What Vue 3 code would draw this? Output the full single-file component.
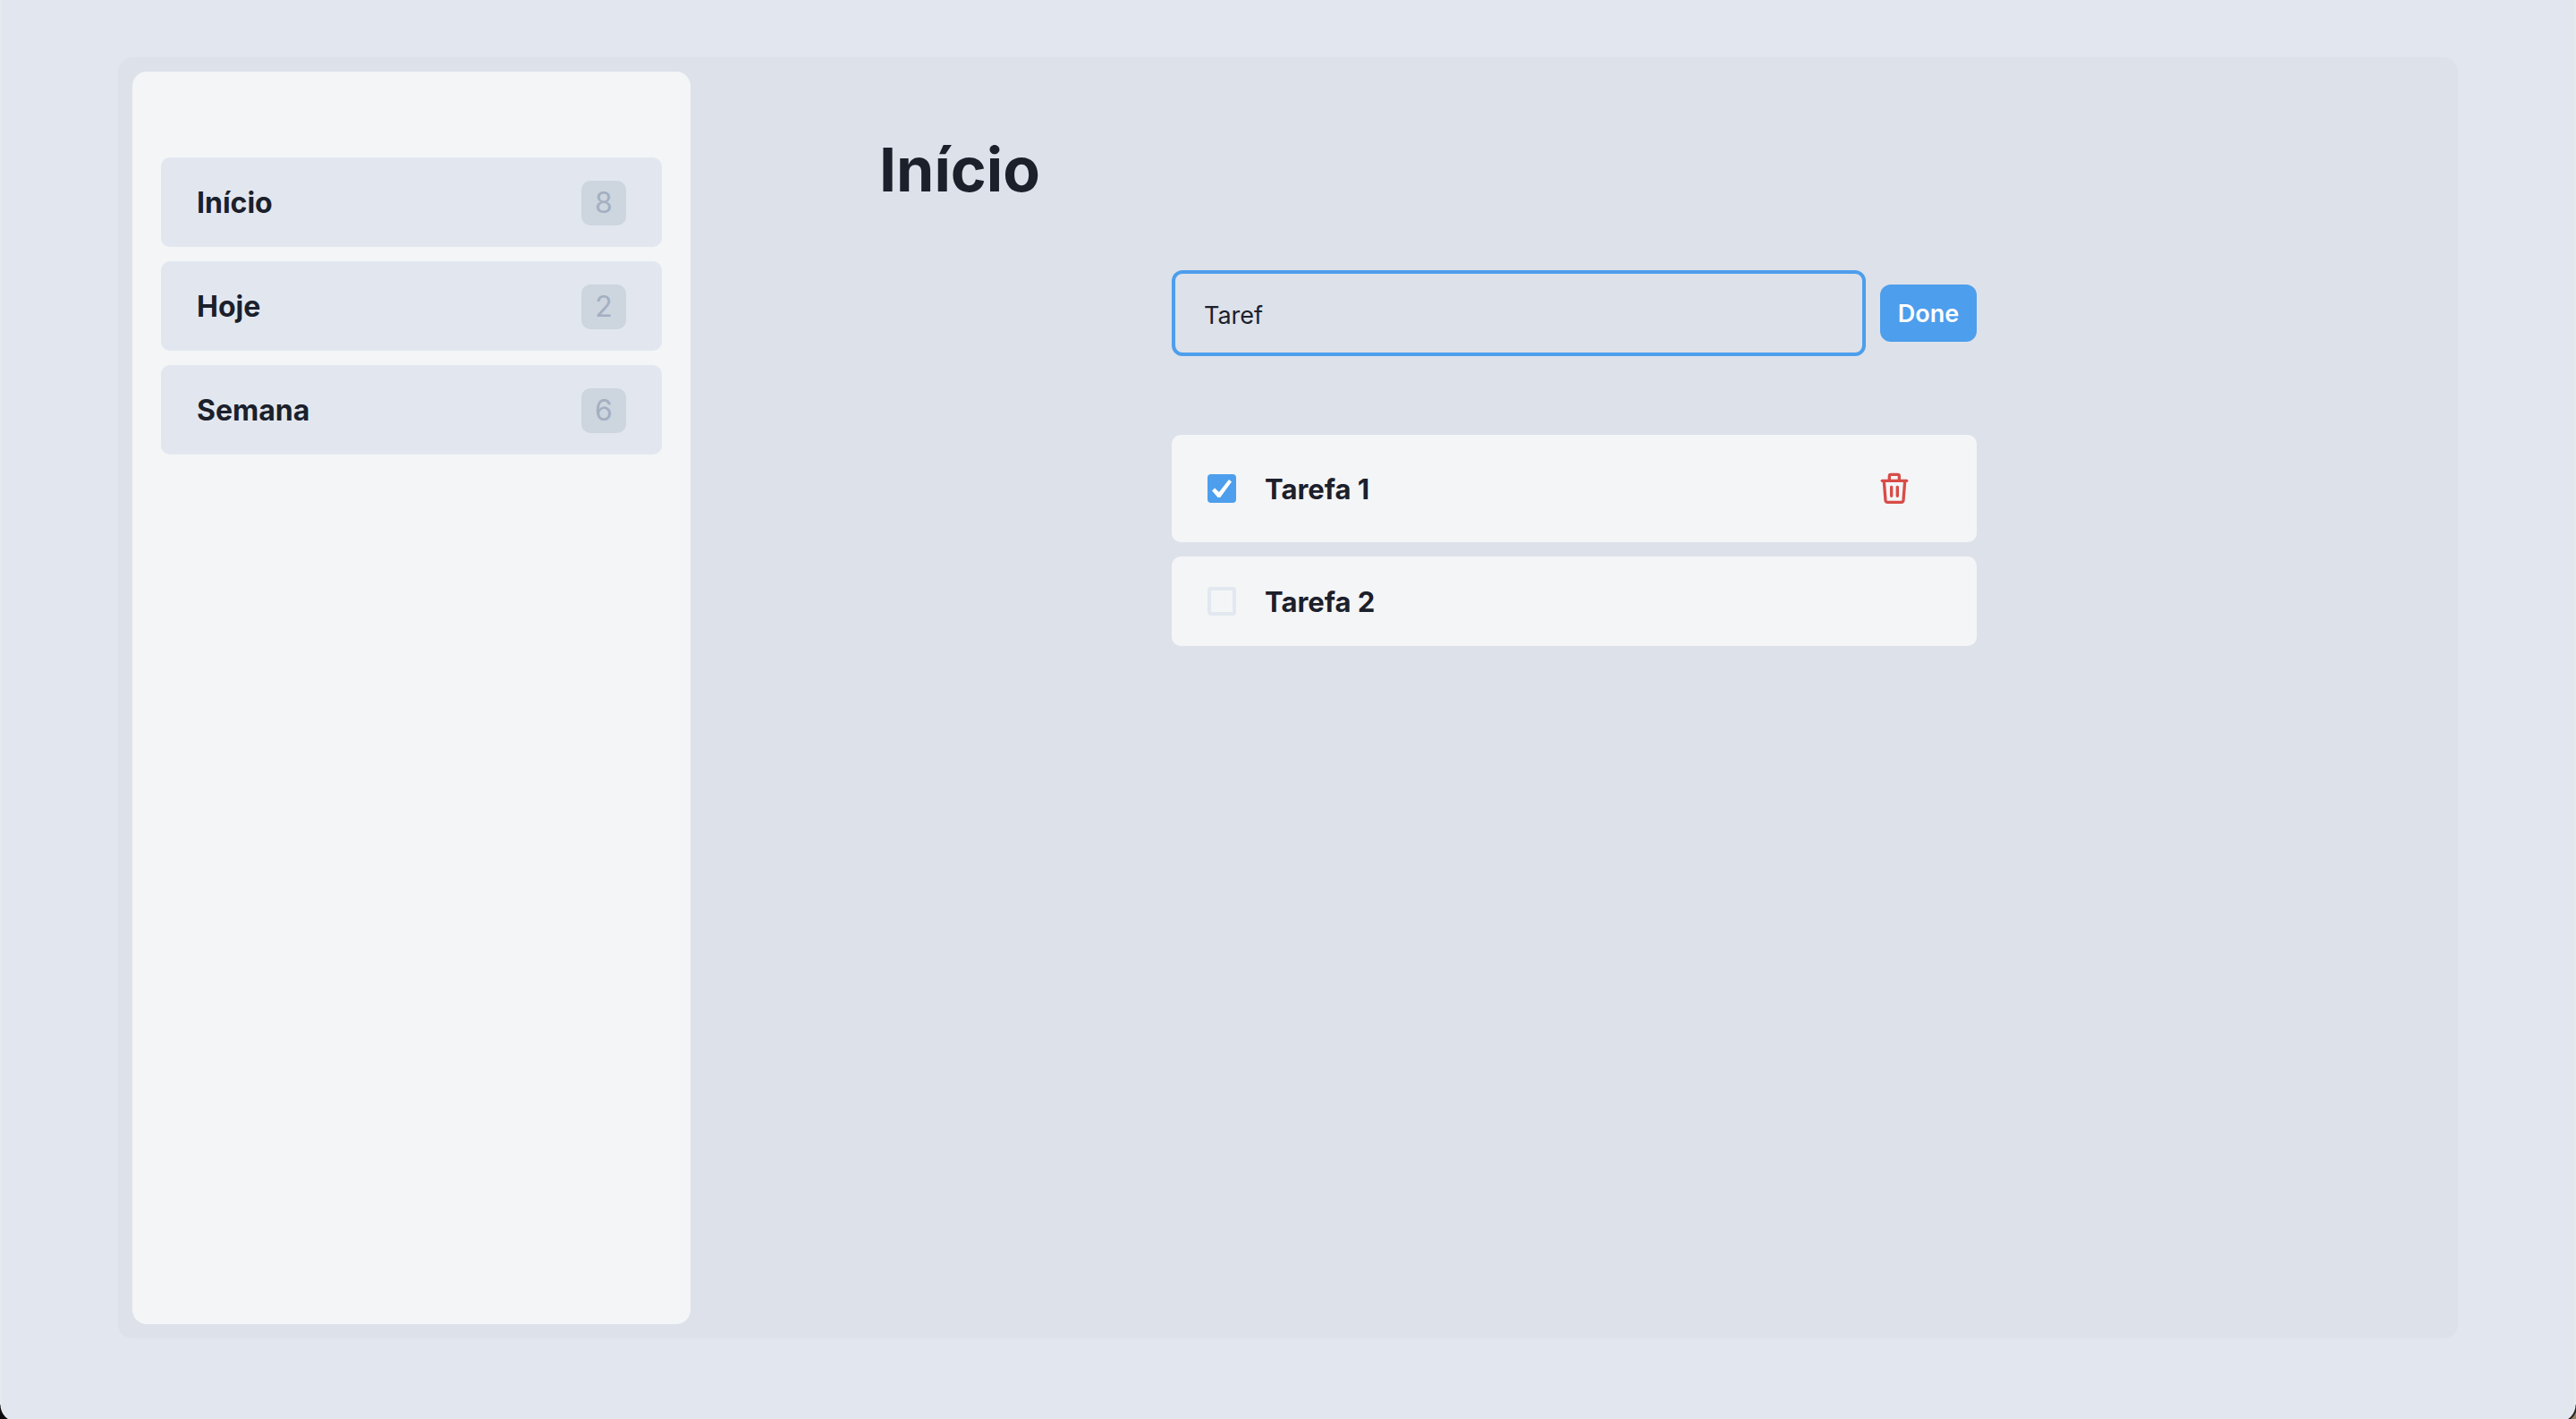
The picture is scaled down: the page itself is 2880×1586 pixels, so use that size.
<script setup>
import { ref } from 'vue'

const lists = [
  { name: 'Início', count: 8 },
  { name: 'Hoje', count: 2 },
  { name: 'Semana', count: 6 },
]

const draft = ref('Taref')

const tasks = ref([
  { id: 1, title: 'Tarefa 1', done: true },
  { id: 2, title: 'Tarefa 2', done: false },
])

function addTask() {
  if (!draft.value.trim()) return
  tasks.value.push({ id: Date.now(), title: draft.value, done: false })
  draft.value = ''
}

function removeTask(id) {
  tasks.value = tasks.value.filter((task) => task.id !== id)
}
</script>

<template>
  <div class="page">
    <div class="board">
      <nav class="sidebar" aria-label="Listas">
        <a v-for="list in lists" :key="list.name" class="list-link" href="#">
          <span class="list-name">{{ list.name }}</span>
          <span class="list-count">{{ list.count }}</span>
        </a>
      </nav>

      <main class="content">
        <h1 class="title">Início</h1>

        <div class="tasks">
          <form class="new-task" @submit.prevent="addTask">
            <input v-model="draft" class="new-input" type="text" aria-label="Nova tarefa" />
            <button class="done-button" type="submit">Done</button>
          </form>

          <ul class="task-list">
            <li v-for="task in tasks" :key="task.id" class="task">
              <label class="task-label">
                <input v-model="task.done" class="check" type="checkbox" />
                <span class="task-title">{{ task.title }}</span>
              </label>
              <button
                v-if="task.done"
                class="delete-button"
                type="button"
                aria-label="Excluir"
                @click="removeTask(task.id)"
              >
                <svg class="trash" viewBox="0 0 90 102" aria-hidden="true">
                  <path d="M4 25H86" />
                  <path d="M28 25V9q0-5 5-5h23q5 0 5 5v16" />
                  <path d="M10 27l5 63q1 7 7 7h46q6 0 7-7l5-63" />
                  <path d="M35 46v30M55 46v30" />
                </svg>
              </button>
            </li>
          </ul>
        </div>
      </main>
    </div>
    <span class="corner corner-left"></span>
    <span class="corner corner-right"></span>
  </div>
</template>

<style>
body {
  margin: 0;
  background: #e2e7ef;
}
</style>

<style scoped>
.page {
  position: relative;
  box-sizing: border-box;
  display: flex;
  min-height: 100vh;
  padding: 64px 130px 90px;
  border: solid #e6eaee;
  border-width: 0 2px;
  background: #e2e7ef;
  color: #1b202b;
  font-family: Inter, "Liberation Sans", sans-serif;
}

.board {
  box-sizing: border-box;
  display: flex;
  flex: 1;
  padding: 16px 0 16px 16px;
  border-radius: 16px;
  background: #dde1ea;
}

.sidebar {
  box-sizing: border-box;
  display: flex;
  flex: 0 1 624px;
  flex-direction: column;
  gap: 16px;
  padding: 96px 32px 32px;
  border-radius: 16px;
  background: #f4f5f7;
}

.list-link {
  box-sizing: border-box;
  display: flex;
  align-items: center;
  justify-content: space-between;
  height: 100px;
  padding: 2px 40px 0;
  border-radius: 10px;
  background: #e2e7ef;
  color: inherit;
  font-size: 32px;
  line-height: 50px;
  text-decoration: none;
}

.list-name {
  font-weight: 700;
}

.list-count {
  width: 50px;
  border-radius: 10px;
  background: #cdd5df;
  color: #a3afc1;
  text-align: center;
}

.content {
  display: flex;
  flex: 1;
  flex-direction: column;
}

.title {
  margin: 68px 0 72px 211px;
  font-size: 68px;
  font-weight: 700;
  line-height: 82px;
}

.tasks {
  width: 900px;
  margin: 0 auto;
}

.new-task {
  display: flex;
  align-items: center;
  gap: 16px;
  margin-bottom: 88px;
}

.new-input {
  box-sizing: border-box;
  flex: 1;
  min-width: 0;
  height: 96px;
  padding: 4px 32px 0;
  border: 4px solid #4d9eec;
  border-radius: 12px;
  outline: 0;
  background: transparent;
  color: inherit;
  font: 400 27px Inter, "Liberation Sans", sans-serif;
}

.done-button {
  width: 108px;
  height: 64px;
  padding: 0;
  border: 0;
  border-radius: 12px;
  background: #4d9eec;
  color: #fff;
  font: 600 27px Inter, "Liberation Sans", sans-serif;
}

.task-list {
  display: flex;
  flex-direction: column;
  gap: 16px;
  margin: 0;
  padding: 0;
  list-style: none;
}

.task {
  display: flex;
  align-items: center;
  justify-content: space-between;
  min-height: 60px;
  padding: 20px 40px;
  border-radius: 10px;
  background: #f4f5f7;
}

.task-label {
  display: flex;
  align-items: center;
  gap: 32px;
}

.task-title {
  padding-top: 2px;
  font-size: 31px;
  font-weight: 700;
  line-height: 48px;
}

.check {
  display: grid;
  place-content: center;
  box-sizing: border-box;
  width: 32px;
  height: 32px;
  margin: 0;
  border: 4px solid #e2e8ef;
  border-radius: 4px;
  appearance: none;
}

.check:checked {
  border-color: #4d9eec;
  background: #4d9eec;
}

.check:checked::before {
  content: "";
  width: 22px;
  height: 20px;
  background: #fff;
  clip-path: polygon(0 62%, 14% 48%, 36% 70%, 86% 0, 100% 12%, 42% 100%, 30% 100%);
}

.delete-button {
  display: grid;
  place-content: center;
  width: 104px;
  height: 80px;
  padding: 0;
  border: 0;
  background: transparent;
}

.trash {
  width: 30px;
  height: 34px;
  overflow: visible;
  fill: none;
  stroke: #d84c48;
  stroke-linecap: round;
  stroke-linejoin: round;
  stroke-width: 10;
}

.corner {
  position: absolute;
  bottom: 0;
  width: 20px;
  height: 16px;
}

.corner-left {
  left: -2px;
  background: radial-gradient(circle at 20px 0, transparent 19px, #0b0b0d 20px);
}

.corner-right {
  right: -2px;
  background: radial-gradient(circle at 0 0, transparent 19px, #24211f 20px, #24211f 21px, #9a8268 22px);
}
</style>
